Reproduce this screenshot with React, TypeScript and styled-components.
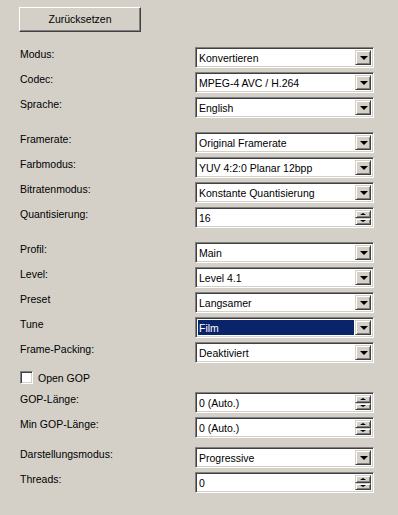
import React from "react";
import styled, { createGlobalStyle } from "styled-components";

const GlobalStyle = createGlobalStyle`
  html, body {
    margin: 0;
    padding: 0;
    background: #d4d0c8;
  }
  body {
    font-family: "Liberation Sans", Arial, sans-serif;
    font-size: 10.5px;
    color: #000;
  }
`;

type Field =
  | { kind: "combo"; label: string; value: string; selected?: boolean }
  | { kind: "spin"; label: string; value: string }
  | { kind: "check"; label: string };

const groups: { top: number; rows: Field[] }[] = [
  {
    top: 15,
    rows: [
      { kind: "combo", label: "Modus:", value: "Konvertieren" },
      { kind: "combo", label: "Codec:", value: "MPEG-4 AVC / H.264" },
      { kind: "combo", label: "Sprache:", value: "English" },
    ],
  },
  {
    top: 14,
    rows: [
      { kind: "combo", label: "Framerate:", value: "Original Framerate" },
      { kind: "combo", label: "Farbmodus:", value: "YUV 4:2:0 Planar 12bpp" },
      { kind: "combo", label: "Bitratenmodus:", value: "Konstante Quantisierung" },
      { kind: "spin", label: "Quantisierung:", value: "16" },
    ],
  },
  {
    top: 14,
    rows: [
      { kind: "combo", label: "Profil:", value: "Main" },
      { kind: "combo", label: "Level:", value: "Level 4.1" },
      { kind: "combo", label: "Preset", value: "Langsamer" },
      { kind: "combo", label: "Tune", value: "Film", selected: true },
      { kind: "combo", label: "Frame-Packing:", value: "Deaktiviert" },
      { kind: "check", label: "Open GOP" },
      { kind: "spin", label: "GOP-Länge:", value: "0 (Auto.)" },
      { kind: "spin", label: "Min GOP-Länge:", value: "0 (Auto.)" },
    ],
  },
  {
    top: 9,
    rows: [
      { kind: "combo", label: "Darstellungsmodus:", value: "Progressive" },
      { kind: "spin", label: "Threads:", value: "0" },
    ],
  },
];

export default function App() {
  return (
    <>
      <GlobalStyle />
      <Panel>
        <PushButton>Zurücksetzen</PushButton>
        {groups.map((g, gi) => (
          <Group key={gi} $top={g.top}>
            {g.rows.map((r) => (
              <Row key={r.label}>
                {r.kind === "check" ? (
                  <CheckRow>
                    <CheckBox />
                    <span>{r.label}</span>
                  </CheckRow>
                ) : (
                  <>
                    <Label>{r.label}</Label>
                    {r.kind === "combo" ? (
                      <Sunken>
                        <ValueText $selected={r.selected}>{r.value}</ValueText>
                        <DropButton>
                          <Arrow />
                        </DropButton>
                      </Sunken>
                    ) : (
                      <Sunken>
                        <ValueText>{r.value}</ValueText>
                        <SpinStack>
                          <SpinButton>
                            <SmallArrow $up />
                          </SpinButton>
                          <SpinButton>
                            <SmallArrow />
                          </SpinButton>
                        </SpinStack>
                      </Sunken>
                    )}
                  </>
                )}
              </Row>
            ))}
          </Group>
        ))}
      </Panel>
    </>
  );
}

const Panel = styled.div`
  width: 398px;
  height: 515px;
  box-sizing: border-box;
  padding: 7px 0 0 19px;
  display: flex;
  flex-direction: column;
`;

const PushButton = styled.div`
  width: 122px;
  height: 25px;
  box-sizing: border-box;
  display: flex;
  align-items: center;
  justify-content: center;
  border: 1px solid;
  border-color: #fff #404040 #404040 #fff;
  box-shadow: inset -1px -1px #808080;
  padding-bottom: 1px;
`;

const Group = styled.div<{ $top: number }>`
  display: flex;
  flex-direction: column;
  gap: 4px;
  margin-top: ${(p) => p.$top}px;
`;

const Row = styled.div`
  display: flex;
  height: 21px;
`;

const Label = styled.div`
  width: 176px;
  padding-left: 1px;
  box-sizing: border-box;
  line-height: 14px;
`;

const Sunken = styled.div`
  width: 179px;
  height: 21px;
  box-sizing: border-box;
  background: #fff;
  border: 1px solid;
  border-color: #808080 #fff #fff #808080;
  box-shadow: inset 1px 1px #404040, inset -1px -1px #d4d0c8;
  padding: 2px;
  display: flex;
  align-items: stretch;
`;

const ValueText = styled.div<{ $selected?: boolean }>`
  flex: 1;
  display: flex;
  align-items: center;
  padding-left: 1px;
  margin-right: 1px;
  background: ${(p) => (p.$selected ? "#0a246a" : "transparent")};
  color: ${(p) => (p.$selected ? "#fff" : "#000")};
`;

const DropButton = styled.div`
  width: 16px;
  box-sizing: border-box;
  background: #d4d0c8;
  border: 1px solid;
  border-color: #d4d0c8 #404040 #404040 #d4d0c8;
  box-shadow: inset 1px 1px #fff, inset -1px -1px #808080;
  display: flex;
  align-items: center;
  justify-content: center;
`;

const Arrow = styled.div`
  width: 0;
  height: 0;
  border-left: 4px solid transparent;
  border-right: 4px solid transparent;
  border-top: 4px solid #000;
  margin-left: 1px;
`;

const SpinStack = styled.div`
  width: 16px;
  display: flex;
  flex-direction: column;
`;

const SpinButton = styled.div`
  flex: 1;
  box-sizing: border-box;
  background: #d4d0c8;
  border: 1px solid;
  border-color: #d4d0c8 #404040 #404040 #d4d0c8;
  box-shadow: inset 1px 1px #fff, inset -1px -1px #808080;
  display: flex;
  align-items: center;
  justify-content: center;
`;

const SmallArrow = styled.div<{ $up?: boolean }>`
  width: 0;
  height: 0;
  border-left: 3px solid transparent;
  border-right: 3px solid transparent;
  ${(p) => (p.$up ? "border-bottom: 2px solid #000;" : "border-top: 2px solid #000;")}
`;

const CheckRow = styled.div`
  display: flex;
  align-items: center;
  gap: 5px;
  padding-left: 1px;
`;

const CheckBox = styled.div`
  width: 13px;
  height: 13px;
  box-sizing: border-box;
  background: #fff;
  border: 1px solid;
  border-color: #808080 #fff #fff #808080;
  box-shadow: inset 1px 1px #404040, inset -1px -1px #d4d0c8;
`;
